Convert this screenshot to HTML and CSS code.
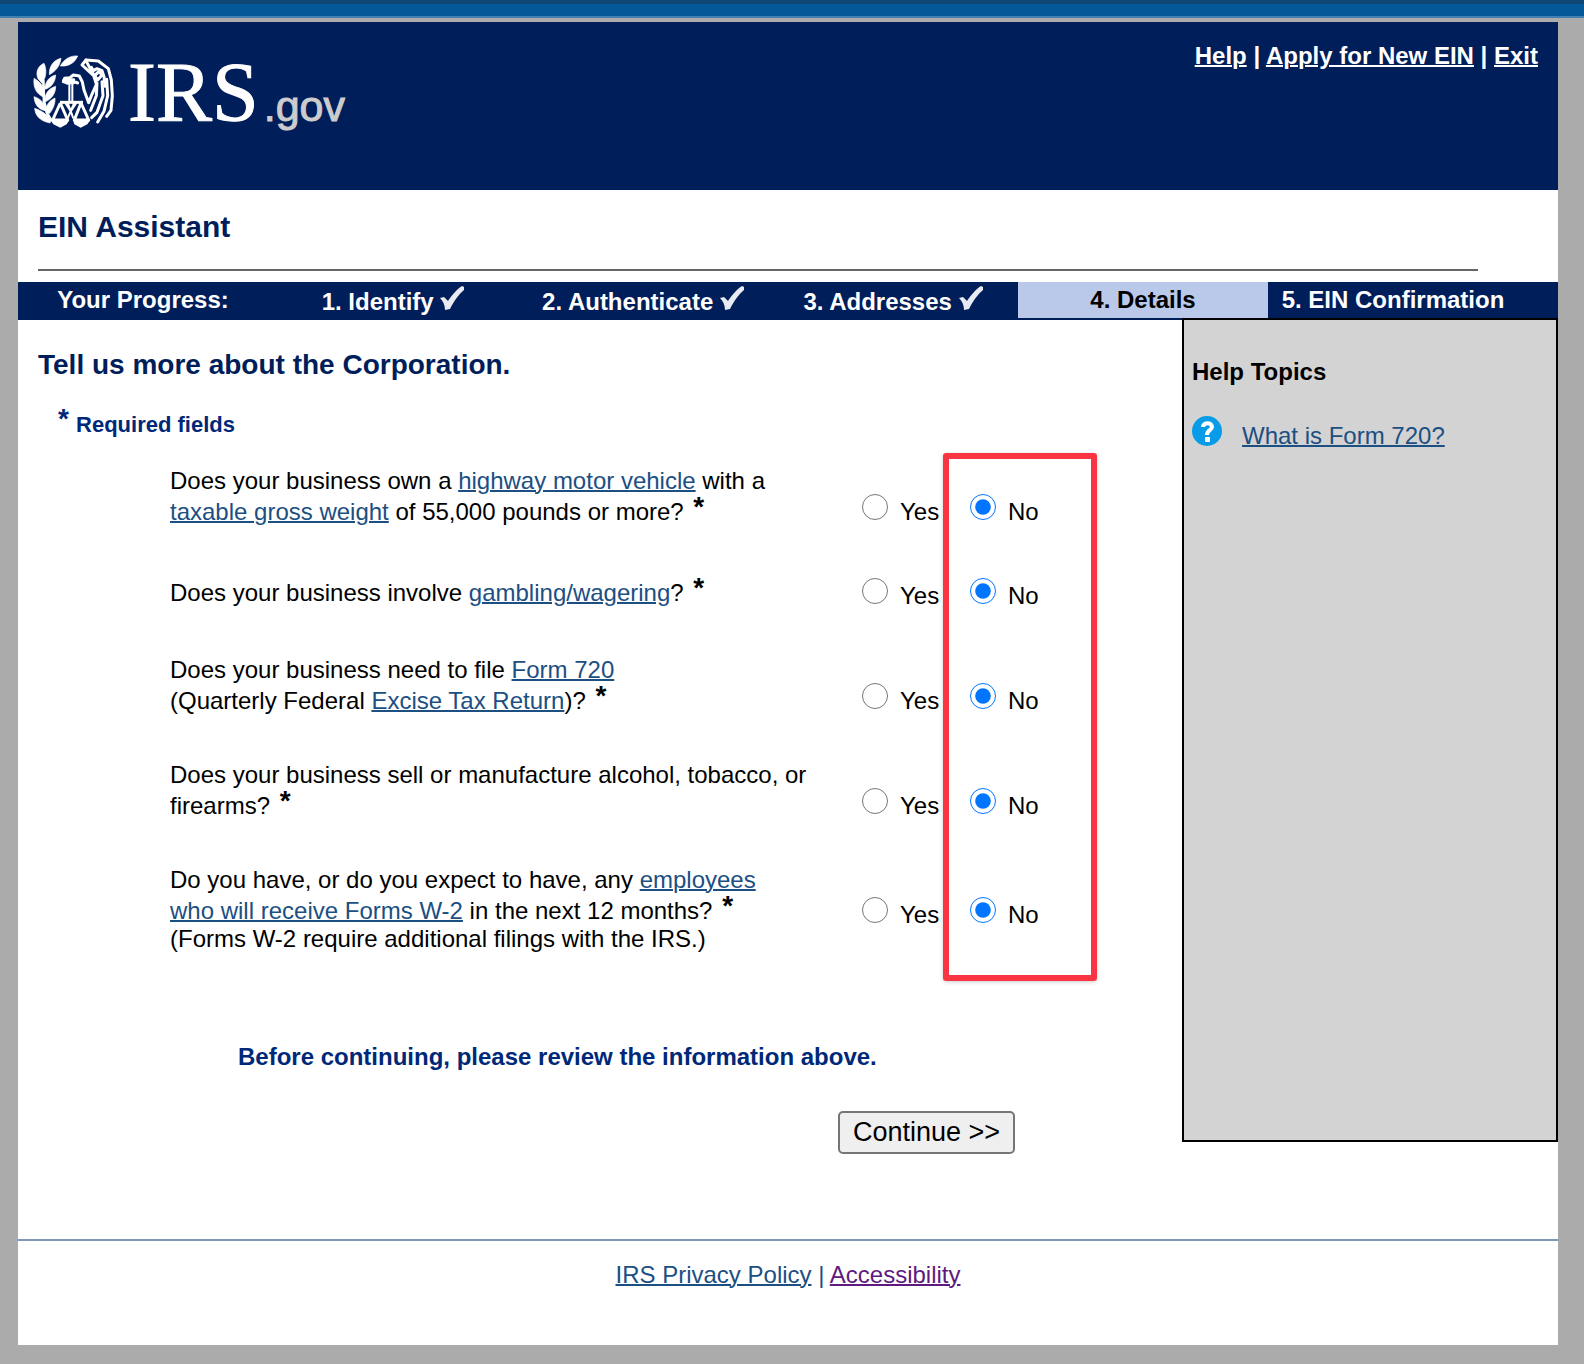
FILE: index.html
```
<!DOCTYPE html>
<html lang="en">
<head>
    <meta charset="UTF-8">
    <meta name="viewport" content="width=device-width, initial-scale=1.0">
    <title>EIN Assistant</title>
    <link rel="stylesheet" href="styles.css">
</head>
<body>

<div class="top-strip"></div>

<div class="page">
    <header class="header">
        <div class="logo">
            <svg class="seal" viewBox="0 0 288 258" aria-hidden="true">
                <!-- laurel branch -->
                <g fill="#fff" stroke="#fff" stroke-width="2" stroke-linejoin="round">
                    <path d="M149 24C128 22 108 33 97 54C120 56 140 46 149 24Z"/>
                    <path d="M99 31C78 36 63 53 64 80C83 70 96 54 99 31Z"/>
                    <path d="M48 46C29 54 22 74 30 92L42 106C55 88 57 66 48 46Z"/>
                    <path d="M83 81C64 86 52 100 50 124C68 120 82 104 83 81Z"/>
                    <path d="M18 91C15 119 25 139 49 148C52 124 42 104 18 91Z"/>
                    <path d="M83 115C61 122 50 137 50 162C70 154 83 138 83 115Z"/>
                    <path d="M18 146C20 169 30 183 51 188C53 169 42 154 18 146Z"/>
                    <path d="M81 150C65 158 54 169 53 193L65 196C76 182 82 167 81 150Z"/>
                    <path d="M20 181C22 207 40 220 67 225C68 207 48 191 20 181Z"/>
                </g>
                <path d="M46 96L48 160L58 197L71 219" fill="none" stroke="#fff" stroke-width="8"/>
                <!-- eagle head, wing and feathers -->
                <g fill="none" stroke="#fff" stroke-width="9" stroke-linejoin="round" stroke-linecap="round">
                    <path d="M118 105L106 101L110 91L126 89L136 81L154 84L163 102L168 126L182 164L190 143L204 112"/>
                    <path d="M108 96L137 95L137 104L118 105M137 100L149 105"/>
                    <path d="M174 36L211 39L241 62L250 96L253 144L249 187L236 205"/>
                    <path d="M174 36L162 51L197 83L205 108"/>
                    <path d="M174 38L191 71L209 96L222 81L213 70L204 79"/>
                    <path d="M190 58L196 68L207 62L222 68L228 86L231 115"/>
                    <path d="M207 105L205 143L188 187"/>
                    <path d="M222 101L225 143L207 193L191 209"/>
                    <path d="M236 94L239 143L228 190L209 222"/>
                </g>
                <!-- scales -->
                <g fill="none" stroke="#fff" stroke-width="9" stroke-linejoin="round">
                    <path d="M124 107V166M133 107V166" stroke-width="6"/>
                    <path d="M96 163H165"/>
                    <path d="M97 165L74 216H119L97 165"/>
                    <path d="M159 165L139 216H182L159 165"/>
                    <path d="M112 165L128 190L145 165M119 164L136 211M139 164L119 211" stroke-width="6"/>
                </g>
                <path d="M67 216H124L116 229L97 239L76 229ZM135 216H187L178 229L158 239L139 229Z" fill="#fff"/>
            </svg>
            <span class="logo-irs">IRS</span><span class="logo-gov">.gov</span>
        </div>
        <nav class="header-links">
            <a href="#help">Help</a> | <a href="#apply">Apply for New EIN</a> | <a href="#exit">Exit</a>
        </nav>
    </header>

    <h1 class="title">EIN Assistant</h1>

    <div class="progress">
        <span class="step">Your Progress:</span>
        <span class="step done">1. Identify <svg class="check" viewBox="0 0 24 24"><path d="M0 12L4 11L8 15C12 9 17 3 22 0L24 1V4C19 8 14 15 10 23L5 24C5 19 3 15 0 12Z"/></svg></span>
        <span class="step done">2. Authenticate <svg class="check" viewBox="0 0 24 24"><path d="M0 12L4 11L8 15C12 9 17 3 22 0L24 1V4C19 8 14 15 10 23L5 24C5 19 3 15 0 12Z"/></svg></span>
        <span class="step done">3. Addresses <svg class="check" viewBox="0 0 24 24"><path d="M0 12L4 11L8 15C12 9 17 3 22 0L24 1V4C19 8 14 15 10 23L5 24C5 19 3 15 0 12Z"/></svg></span>
        <span class="step current">4. Details</span>
        <span class="step">5. EIN Confirmation</span>
    </div>

    <div class="content">
        <main class="main">
            <h2>Tell us more about the Corporation.</h2>
            <p class="required"><span class="star">*</span> Required fields</p>

            <form class="form">
                <div class="questions">
                    <div class="question" role="radiogroup" aria-labelledby="q1">
                        <p id="q1">Does your business own a <a href="#vehicle">highway motor vehicle</a> with a<br>
                        <a href="#weight">taxable gross weight</a> of 55,000 pounds or more? <span class="star">*</span></p>
                        <div class="choices">
                            <label><input type="radio" name="highway"> Yes</label>
                            <label><input type="radio" name="highway" checked> No</label>
                        </div>
                    </div>
                    <div class="question" role="radiogroup" aria-labelledby="q2">
                        <p id="q2">Does your business involve <a href="#gambling">gambling/wagering</a>? <span class="star">*</span></p>
                        <div class="choices">
                            <label><input type="radio" name="gambling"> Yes</label>
                            <label><input type="radio" name="gambling" checked> No</label>
                        </div>
                    </div>
                    <div class="question" role="radiogroup" aria-labelledby="q3">
                        <p id="q3">Does your business need to file <a href="#form720">Form 720</a><br>
                        (Quarterly Federal <a href="#excise">Excise Tax Return</a>)? <span class="star">*</span></p>
                        <div class="choices">
                            <label><input type="radio" name="excise"> Yes</label>
                            <label><input type="radio" name="excise" checked> No</label>
                        </div>
                    </div>
                    <div class="question" role="radiogroup" aria-labelledby="q4">
                        <p id="q4">Does your business sell or manufacture alcohol, tobacco, or<br>
                        firearms? <span class="star">*</span></p>
                        <div class="choices">
                            <label><input type="radio" name="alcohol"> Yes</label>
                            <label><input type="radio" name="alcohol" checked> No</label>
                        </div>
                    </div>
                    <div class="question" role="radiogroup" aria-labelledby="q5">
                        <p id="q5">Do you have, or do you expect to have, any <a href="#w2">employees<br>
                        who will receive Forms W-2</a> in the next 12 months? <span class="star">*</span><br>
                        (Forms W-2 require additional filings with the IRS.)</p>
                        <div class="choices">
                            <label><input type="radio" name="employees"> Yes</label>
                            <label><input type="radio" name="employees" checked> No</label>
                        </div>
                    </div>
                    <div class="highlight"></div>
                </div>

                <p class="review">Before continuing, please review the information above.</p>
                <div class="actions">
                    <button type="submit" class="continue">Continue &gt;&gt;</button>
                </div>
            </form>
        </main>

        <aside class="help">
            <h3>Help Topics</h3>
            <div class="help-item">
                <svg class="help-icon" viewBox="0 0 30 30" aria-hidden="true">
                    <circle cx="15" cy="15" r="15" fill="#089ce8"/>
                    <path d="M11 11C11 6 20 6 20 11C20 14 15 14 15 19" fill="none" stroke="#fff" stroke-width="4"/>
                    <rect x="13" y="21" width="5" height="5" rx="1" fill="#fff"/>
                </svg>
                <a href="#what-is-720">What is Form 720?</a>
            </div>
        </aside>
    </div>

    <footer class="footer">
        <a href="#privacy">IRS Privacy Policy</a> | <a class="visited" href="#accessibility">Accessibility</a>
    </footer>
</div>

</body>
</html>
```
FILE: styles.css
```
* {
    box-sizing: border-box;
}
body {
    font-family: "Liberation Sans", Arial, sans-serif;
    font-size: 24px;
    line-height: 28px;
    margin: 0;
    background-color: #ababab;
    color: #000;
}
h1, h2, h3, p {
    margin: 0;
}
a {
    color: #1c4f82;
    text-decoration-thickness: 2px;
}
.top-strip {
    height: 18px;
    background-color: #045898;
    border-top: 4px solid #0f4674;
    border-bottom: 2px solid #3f7fb2;
}
.page {
    margin: 4px 26px 18px 18px;
    background-color: #fff;
}

/* header */
.header {
    display: flex;
    justify-content: space-between;
    align-items: flex-start;
    height: 168px;
    padding: 20px 20px 0 10px;
    background-color: #001e5a;
    color: #fff;
    font-weight: bold;
}
.header-links a {
    color: #fff;
}
.logo {
    display: flex;
    align-items: baseline;
    padding-top: 6px;
    font-weight: normal;
    line-height: 90px;
}
.seal {
    width: 96px;
    height: 86px;
    align-self: flex-start;
}
.logo-irs {
    margin-left: 4px;
    font-family: "Liberation Serif", "Times New Roman", serif;
    font-size: 84px;
    -webkit-text-stroke: 1px #fff;
}
.logo-gov {
    margin-left: 5px;
    font-size: 43px;
    color: #ccc;
    -webkit-text-stroke: 1px #ccc;
}

.title {
    margin: 0 80px 11px 20px;
    padding: 20px 0 25px;
    border-bottom: 2px solid #666;
    font-size: 30px;
    line-height: 34px;
    color: #001e5a;
}

/* progress bar */
.progress {
    display: flex;
    height: 38px;
    padding: 0 40px 2px 0;
    background-color: #001e5a;
    color: #fff;
    font-weight: bold;
    line-height: 36px;
}
.step {
    flex: 1;
    text-align: center;
    white-space: nowrap;
}
.done {
    line-height: 40px;
}
.current {
    background-color: #bac9e9;
    color: #000;
}
.check {
    width: 24px;
    height: 24px;
    fill: #e9ebf2;
    vertical-align: baseline;
}

/* content */
.content {
    display: flex;
    align-items: flex-start;
    margin-bottom: 85px;
}
.main {
    flex: 1;
    padding-left: 20px;
}
.main h2 {
    padding-top: 29px;
    font-size: 28px;
    line-height: 32px;
    color: #001e5a;
}
.required {
    padding: 26px 0 0 20px;
    font-size: 22px;
    font-weight: bold;
    color: #002878;
}
.star {
    margin-left: 3px;
    font-size: 28px;
    font-weight: bold;
    line-height: 24px;
    vertical-align: 4px;
}
.required .star {
    margin: 0 1px 0 0;
}
.questions {
    position: relative;
    padding: 28px 0 0 132px;
}
.question {
    display: flex;
    align-items: flex-end;
    padding-bottom: 46px;
}
.question p {
    width: 692px;
    align-self: center;
}
.question:nth-child(5) .choices {
    align-self: center;
}
.choices {
    display: flex;
    height: 38px;
    align-items: flex-start;
}
.choices label {
    display: flex;
    width: 108px;
    gap: 12px;
    align-items: flex-start;
    line-height: 48px;
}
.choices input {
    width: 26px;
    height: 26px;
    margin: 6px 0 0;
}
.highlight {
    position: absolute;
    top: 14px;
    left: 905px;
    bottom: 18px;
    width: 154px;
    border: 6px solid #fa3543;
    border-radius: 3px;
    box-shadow: 0 1px 4px rgba(0, 0, 0, 0.2);
    pointer-events: none;
}
.review {
    padding: 44px 0 0 200px;
    font-weight: bold;
    color: #002878;
}
.actions {
    padding: 40px 0 0 800px;
}
.continue {
    height: 43px;
    padding: 0 13px;
    border: 2px solid #767676;
    border-radius: 5px;
    background-color: #efefef;
    color: #000;
    font-family: inherit;
    font-size: 27px;
}

/* help column */
.help {
    width: 376px;
    height: 824px;
    margin-top: -2px;
    padding: 38px 8px 0;
    border: 2px solid #000;
    background-color: #d3d3d3;
}
.help h3 {
    font-size: 24px;
}
.help-item {
    display: flex;
    gap: 20px;
    padding-top: 30px;
}
.help-item a {
    padding-top: 6px;
}
.help-icon {
    width: 30px;
    height: 30px;
}

.footer {
    padding: 20px 0 56px;
    border-top: 2px solid #8096bb;
    color: #1c4f82;
    text-align: center;
}
.footer .visited {
    color: #5f1a80;
}
```
